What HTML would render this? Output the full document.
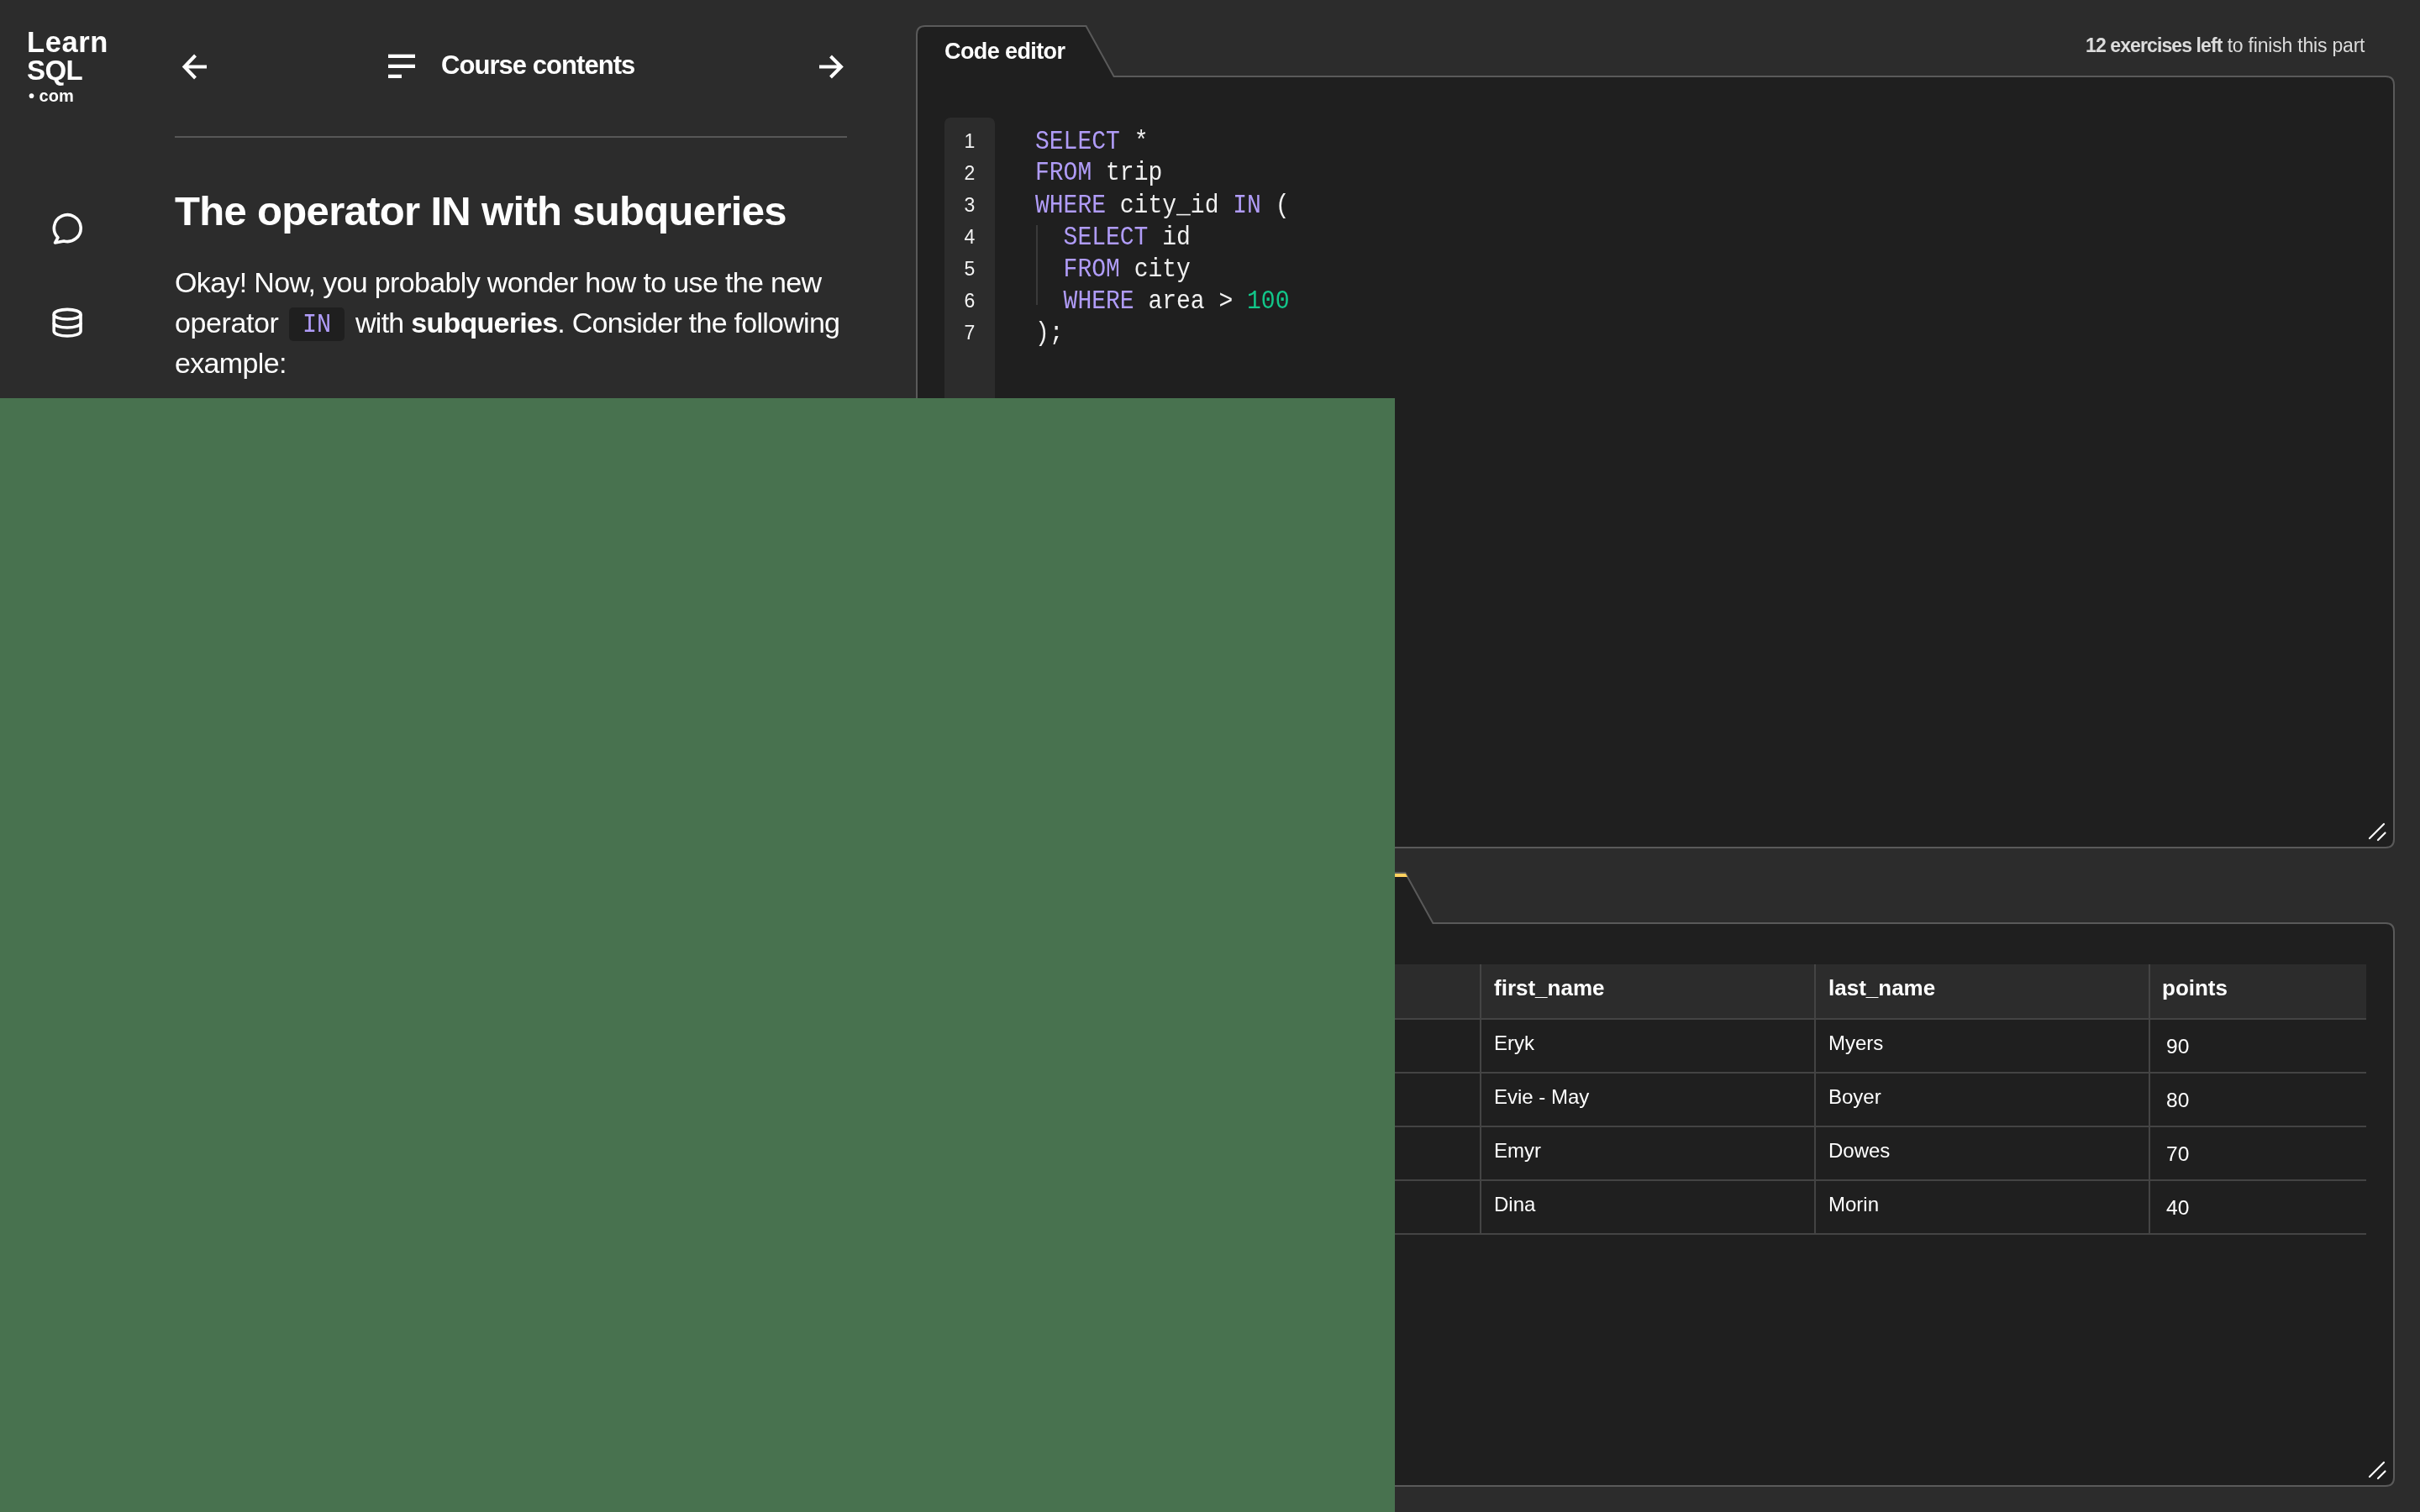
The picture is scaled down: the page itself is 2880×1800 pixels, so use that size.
<!DOCTYPE html>
<html><head><meta charset="utf-8">
<style>
html,body{margin:0;padding:0;}
body{width:2880px;height:1800px;overflow:hidden;background:#2c2c2c;position:relative;font-family:"Liberation Sans",sans-serif;color:#fff;}
.a{position:absolute;white-space:nowrap;line-height:1;will-change:transform;}
.mono{font-family:"Liberation Mono",monospace;}
.kw{color:#b09cf8;}
.num{color:#12c78a;}
svg{position:absolute;overflow:visible;}
</style></head>
<body>

<!-- logo -->
<div class="a" id="logo1" style="left:32px;top:32.5px;font-size:34.5px;font-weight:bold;letter-spacing:0.6px;">Learn</div>
<div class="a" id="logo2" style="left:32px;top:67px;font-size:33px;font-weight:bold;letter-spacing:-0.6px;">SQL</div>
<div class="a" id="logo3" style="left:34px;top:104px;font-size:20px;font-weight:bold;">&#8226; com</div>

<!-- back arrow -->
<svg style="left:0;top:0" width="2880" height="1800">
  <g fill="none" stroke="#fff" stroke-width="4" stroke-linecap="butt">
    <path d="M246 79.5 H221 M232.5 66 L219.5 79.5 L232.5 93"/>
    <path d="M975 79.5 H1000 M988.5 67 L1001 79.5 L988.5 92"/>
  </g>
  <g fill="#fff">
    <rect x="462" y="64.7" width="32" height="4.3"/>
    <rect x="462" y="76.7" width="32" height="4.3"/>
    <rect x="462" y="88.7" width="16" height="4.3"/>
  </g>
  <rect x="208" y="162" width="800" height="2" fill="#575757"/>
  <!-- chat icon -->
  <g fill="none" stroke="#fff" stroke-width="3.6" stroke-linejoin="round">
    <path d="M68.9 282.8 A15.9 15.9 0 1 1 76 287 L65.5 289 Z"/>
  </g>
  <!-- db icon -->
  <g fill="none" stroke="#fff" stroke-width="3.6">
    <ellipse cx="80.1" cy="374.2" rx="15.9" ry="5.85"/>
    <path d="M64.2 374.2 V394.2 A15.9 5.85 0 0 0 96 394.2 V374.2"/>
    <path d="M64.2 384.2 A15.9 5.85 0 0 0 96 384.2"/>
  </g>
</svg>

<div class="a" id="cc" style="left:525px;top:62px;font-size:31px;font-weight:bold;letter-spacing:-0.95px;">Course contents</div>

<div class="a" id="h1" style="left:208px;top:227px;font-size:49px;font-weight:bold;letter-spacing:-0.67px;">The operator IN with subqueries</div>

<div class="a" id="p1" style="left:208px;top:319px;font-size:34px;letter-spacing:-0.65px;">Okay! Now, you probably wonder how to use the new</div>
<div class="a" id="p2a" style="left:208px;top:367px;font-size:34px;letter-spacing:-0.4px;">operator</div>
<div class="a" id="p2b" style="left:423px;top:367px;font-size:34px;letter-spacing:-0.73px;">with <b>subqueries</b>. Consider the following</div>
<div class="a" id="p3" style="left:208px;top:415px;font-size:34px;letter-spacing:-0.65px;">example:</div>
<div style="position:absolute;left:344px;top:366px;width:66px;height:40px;background:#1f1f1f;border-radius:5px;"></div>
<div class="a mono kw" id="chipIN" style="left:360px;top:373px;font-size:28.5px;transform:scaleY(1.1);transform-origin:0 12px;">IN</div>

<!-- code editor panel -->
<svg style="left:0;top:0" width="2880" height="1800">
  <path d="M1091 1100 V41 Q1091 31 1101 31 H1292.5 L1325.6 91 H2839 Q2849 91 2849 101 V999 Q2849 1009 2839 1009 H1101 Q1091 1009 1091 999 Z" fill="#1f1f1f" stroke="#5a5a5a" stroke-width="2"/>
  <rect x="1124" y="140" width="60" height="860" rx="7" fill="#2c2c2c"/>
  <path d="M1234 268 V363" stroke="#444" stroke-width="1.5"/>
  <g stroke="#fff" stroke-width="2.2" stroke-linecap="round">
    <path d="M2820 998 L2837 981"/>
    <path d="M2830 1000 L2838.5 991.5"/>
  </g>
  <!-- results panel -->
  <path d="M1000 1770 V1049 Q1000 1039 1010 1039 H1672.3 L1705.4 1099 H2839 Q2849 1099 2849 1109 V1759 Q2849 1769 2839 1769 H1010 Q1000 1769 1000 1759 Z" fill="#1f1f1f" stroke="#5a5a5a" stroke-width="2"/>
  <path d="M1000 1040 H1672.8 L1675 1044 H1000 Z" fill="#ffd15f"/>
  <g stroke="#fff" stroke-width="2.2" stroke-linecap="round">
    <path d="M2820 1758 L2837 1741"/>
    <path d="M2830 1760 L2838.5 1751.5"/>
  </g>
</svg>

<div class="a" id="ce" style="left:1123.5px;top:48px;font-size:27px;font-weight:bold;letter-spacing:-0.6px;">Code editor</div>
<div class="a" id="ex" style="left:2482px;top:43px;font-size:23px;color:#dcdcdc;letter-spacing:-0.2px;"><b style="letter-spacing:-0.9px">12 exercises left</b> to finish this part</div>

<!-- line numbers -->
<div class="a" style="left:1139px;top:148.5px;font-size:23px;line-height:38.07px;color:#f4f4f4;text-align:center;width:30px;white-space:pre;">1
2
3
4
5
6
7</div>
<div class="a mono" id="code" style="left:1232px;top:150px;font-size:28px;line-height:34.39px;color:#f0f0f0;white-space:pre;transform:scaleY(1.107);transform-origin:0 0;"><span class="kw">SELECT</span> *
<span class="kw">FROM</span> trip
<span class="kw">WHERE</span> city_id <span class="kw">IN</span> (
  <span class="kw">SELECT</span> id
  <span class="kw">FROM</span> city
  <span class="kw">WHERE</span> area &gt; <span class="num">100</span>
);</div>

<!-- table -->
<div style="position:absolute;left:1100px;top:1148px;width:1716px;height:64px;background:#2c2c2c;"></div>
<svg style="left:0;top:0" width="2880" height="1800">
  <g fill="#444">
    <rect x="1100" y="1212" width="1716" height="2"/>
    <rect x="1100" y="1276" width="1716" height="2"/>
    <rect x="1100" y="1340" width="1716" height="2"/>
    <rect x="1100" y="1404" width="1716" height="2"/>
    <rect x="1100" y="1468" width="1716" height="2"/>
    <rect x="1761" y="1148" width="2" height="321"/>
    <rect x="2159" y="1148" width="2" height="321"/>
    <rect x="2557" y="1148" width="2" height="321"/>
  </g>
</svg>
<div class="a" style="left:1778px;top:1163px;font-size:26px;font-weight:bold;">first_name</div>
<div class="a" style="left:2176px;top:1163px;font-size:26px;font-weight:bold;">last_name</div>
<div class="a" style="left:2573px;top:1163px;font-size:26px;font-weight:bold;">points</div>

<div class="a" style="left:1778px;top:1230px;font-size:24px;">Eryk</div>
<div class="a" style="left:2176px;top:1230px;font-size:24px;">Myers</div>
<div class="a" style="left:2578px;top:1234px;font-size:24.5px;">90</div>
<div class="a" style="left:1778px;top:1294px;font-size:24px;">Evie - May</div>
<div class="a" style="left:2176px;top:1294px;font-size:24px;">Boyer</div>
<div class="a" style="left:2578px;top:1298px;font-size:24.5px;">80</div>
<div class="a" style="left:1778px;top:1358px;font-size:24px;">Emyr</div>
<div class="a" style="left:2176px;top:1358px;font-size:24px;">Dowes</div>
<div class="a" style="left:2578px;top:1362px;font-size:24.5px;">70</div>
<div class="a" style="left:1778px;top:1422px;font-size:24px;">Dina</div>
<div class="a" style="left:2176px;top:1422px;font-size:24px;">Morin</div>
<div class="a" style="left:2578px;top:1426px;font-size:24.5px;">40</div>

<!-- overlay -->
<div style="position:absolute;left:0;top:474px;width:1660px;height:1326px;background:#48724f;"></div>

</body></html>
